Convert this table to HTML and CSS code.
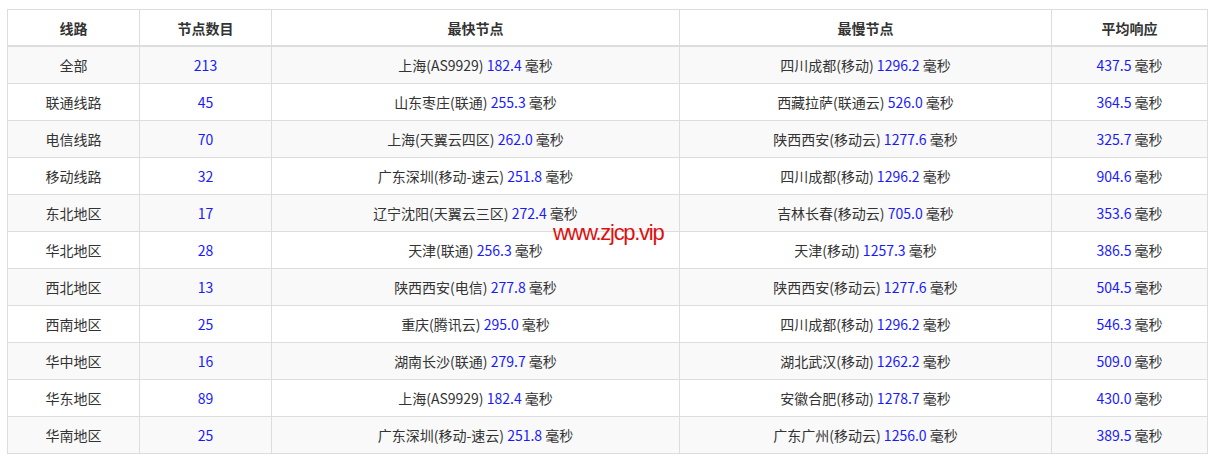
FILE: index.html
```html
<!DOCTYPE html>
<html lang="zh">
<head>
<meta charset="utf-8">
<link rel="stylesheet" href="styles.css">
</head>
<body>
<div class="wrap">
<table class="tbl">
<colgroup><col class="c1"><col class="c2"><col class="c3"><col class="c4"><col class="c5"></colgroup>
<thead><tr><th>线路</th><th>节点数目</th><th>最快节点</th><th>最慢节点</th><th>平均响应</th></tr></thead>
<tbody>
<tr><td>全部</td><td><span class="n">213</span></td><td>上海(AS9929) <span class="n">182.4</span> 毫秒</td><td>四川成都(移动) <span class="n">1296.2</span> 毫秒</td><td><span class="n">437.5</span> 毫秒</td></tr>
<tr><td>联通线路</td><td><span class="n">45</span></td><td>山东枣庄(联通) <span class="n">255.3</span> 毫秒</td><td>西藏拉萨(联通云) <span class="n">526.0</span> 毫秒</td><td><span class="n">364.5</span> 毫秒</td></tr>
<tr><td>电信线路</td><td><span class="n">70</span></td><td>上海(天翼云四区) <span class="n">262.0</span> 毫秒</td><td>陕西西安(移动云) <span class="n">1277.6</span> 毫秒</td><td><span class="n">325.7</span> 毫秒</td></tr>
<tr><td>移动线路</td><td><span class="n">32</span></td><td>广东深圳(移动-速云) <span class="n">251.8</span> 毫秒</td><td>四川成都(移动) <span class="n">1296.2</span> 毫秒</td><td><span class="n">904.6</span> 毫秒</td></tr>
<tr><td>东北地区</td><td><span class="n">17</span></td><td>辽宁沈阳(天翼云三区) <span class="n">272.4</span> 毫秒</td><td>吉林长春(移动云) <span class="n">705.0</span> 毫秒</td><td><span class="n">353.6</span> 毫秒</td></tr>
<tr><td>华北地区</td><td><span class="n">28</span></td><td>天津(联通) <span class="n">256.3</span> 毫秒</td><td>天津(移动) <span class="n">1257.3</span> 毫秒</td><td><span class="n">386.5</span> 毫秒</td></tr>
<tr><td>西北地区</td><td><span class="n">13</span></td><td>陕西西安(电信) <span class="n">277.8</span> 毫秒</td><td>陕西西安(移动云) <span class="n">1277.6</span> 毫秒</td><td><span class="n">504.5</span> 毫秒</td></tr>
<tr><td>西南地区</td><td><span class="n">25</span></td><td>重庆(腾讯云) <span class="n">295.0</span> 毫秒</td><td>四川成都(移动) <span class="n">1296.2</span> 毫秒</td><td><span class="n">546.3</span> 毫秒</td></tr>
<tr><td>华中地区</td><td><span class="n">16</span></td><td>湖南长沙(联通) <span class="n">279.7</span> 毫秒</td><td>湖北武汉(移动) <span class="n">1262.2</span> 毫秒</td><td><span class="n">509.0</span> 毫秒</td></tr>
<tr><td>华东地区</td><td><span class="n">89</span></td><td>上海(AS9929) <span class="n">182.4</span> 毫秒</td><td>安徽合肥(移动) <span class="n">1278.7</span> 毫秒</td><td><span class="n">430.0</span> 毫秒</td></tr>
<tr><td>华南地区</td><td><span class="n">25</span></td><td>广东深圳(移动-速云) <span class="n">251.8</span> 毫秒</td><td>广东广州(移动云) <span class="n">1256.0</span> 毫秒</td><td><span class="n">389.5</span> 毫秒</td></tr>
</tbody>
</table>
<div class="wm">www.zjcp.vip</div>
</div>
</body>
</html>
```
FILE: styles.css
```css
html, body { margin: 0; padding: 0; background: #fff; }
body { font-family: "Noto Sans CJK SC", "Noto Sans", sans-serif; font-size: 14px; color: #333; }
.wrap { position: relative; padding: 9px 0 0 7px; }
.tbl { border-collapse: collapse; width: 1200px; table-layout: fixed; }
.c1 { width: 132px; } .c2 { width: 132px; } .c3 { width: 408px; } .c4 { width: 372px; } .c5 { width: 156px; }
.tbl th, .tbl td { border: 1px solid #ddd; text-align: center; height: 36px; padding: 0; line-height: 20px; }
.tbl th { font-weight: bold; border-bottom: 2px solid #ddd; height: 35px; }
.tbl tbody tr:nth-child(odd) { background: #f9f9f9; }
.n { color: #1a1aff; }
.wm { position: absolute; left: 553px; top: 223px; line-height: 20px; color: #e01010; font-family: "Liberation Sans", Arial, sans-serif; font-size: 22px; letter-spacing: -1.3px; }
```
